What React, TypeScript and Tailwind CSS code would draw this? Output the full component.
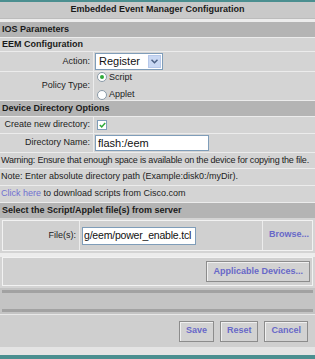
import React from "react";

function SectionHeader({ children }: { children: React.ReactNode }) {
  return (
    <div className="h-[15px] bg-[#b4b4b4] flex items-center pl-[2px] font-bold text-[9px] text-[#1a1a1a]">
      {children}
    </div>
  );
}

function FieldRow({ label, height, children }: { label: string; height: string; children: React.ReactNode }) {
  return (
    <div className={`flex gap-px ${height}`}>
      <div className="w-[93px] bg-[#d4d4d4] flex items-center justify-end pr-[3px]">{label}</div>
      <div className="flex-1 bg-[#d4d4d4] flex items-center pl-px">{children}</div>
    </div>
  );
}

function Radio({ checked, label }: { checked?: boolean; label: string }) {
  return (
    <div className="flex items-center gap-[2px]">
      <span className="w-[10px] h-[10px] rounded-full bg-white border border-[#8a9aa8] flex items-center justify-center">
        {checked && <span className="w-[4px] h-[4px] rounded-full bg-[#2faa3a]" />}
      </span>
      <span>{label}</span>
    </div>
  );
}

function Btn({ children }: { children: React.ReactNode }) {
  return (
    <div className="border border-[#8c8c8c] shadow-[inset_1px_1px_0_#f0f0f0] bg-[#d2d2d2] h-[21px] px-[6px] flex items-center font-bold text-[#6868c8]">
      {children}
    </div>
  );
}

export default function App() {
  return (
    <div className="w-[315px] h-[359px] bg-[#ececec] flex flex-col overflow-hidden font-['Liberation_Sans',Arial,sans-serif] text-[9px] text-[#222]">
      <div className="h-[2px] bg-[#4b8f90]" />
      <div className="h-[17px] bg-[#c9c9c9] border-b border-[#bcbcbc] flex items-center justify-center font-bold text-[#1a1a1a]">
        Embedded Event Manager Configuration
      </div>
      <div className="h-[3px]" />

      <div className="flex flex-col gap-px">
        <SectionHeader>IOS Parameters</SectionHeader>
        <div className="h-[13px] bg-[#d4d4d4] flex items-center pl-[2px] font-bold text-[#1a1a1a]">EEM Configuration</div>

        <FieldRow label="Action:" height="h-[19px]">
          <div className="w-[68px] h-[17px] bg-white border border-[#7f9db9] flex items-center">
            <span className="flex-1 pl-[3px] text-[11px] text-[#111]">Register</span>
            <span className="w-[13px] h-[13px] mr-px bg-[#c9d8f3] border border-[#b6c8ea] flex items-center justify-center">
              <svg width="7" height="5" viewBox="0 0 7 5">
                <path d="M0.5 0.8 L3.5 3.8 L6.5 0.8" fill="none" stroke="#4d6185" strokeWidth="1.5" />
              </svg>
            </span>
          </div>
        </FieldRow>

        <FieldRow label="Policy Type:" height="h-[28px]">
          <div className="flex flex-col gap-[4px] pl-[2px]">
            <Radio checked label="Script" />
            <Radio label="Applet" />
          </div>
        </FieldRow>

        <SectionHeader>Device Directory Options</SectionHeader>

        <FieldRow label="Create new directory:" height="h-[16px]">
          <span className="ml-[2px] w-[10px] h-[10px] bg-white border border-[#7f9db9] flex items-center justify-center">
            <svg width="7" height="6" viewBox="0 0 7 6">
              <path d="M0.8 3 L2.7 4.9 L6.2 0.9" fill="none" stroke="#2faa3a" strokeWidth="1.5" />
            </svg>
          </span>
        </FieldRow>

        <FieldRow label="Directory Name:" height="h-[18px]">
          <div className="w-[114px] h-[16px] bg-white border border-[#7f9db9] flex items-center pl-[2px] text-[11px] text-[#111]">
            flash:/eem
          </div>
        </FieldRow>

        <div className="h-[15px] bg-[#d4d4d4] flex items-center pl-px whitespace-nowrap tracking-[-0.2px]">
          Warning: Ensure that enough space is available on the device for copying the file.
        </div>
        <div className="h-[16px] bg-[#d4d4d4] flex items-center pl-px">
          Note: Enter absolute directory path (Example:disk0:/myDir).
        </div>
        <div className="h-[16px] bg-[#d4d4d4] flex items-center pl-px">
          <span className="text-[#7070d0]">Click here</span>&nbsp;to download scripts from Cisco.com
        </div>

        <SectionHeader>Select the Script/Applet file(s) from server</SectionHeader>
      </div>

      <div className="h-[35px] bg-[#d4d4d4] p-[2px]">
        <div className="h-full border border-[#f2f2f2] flex gap-px bg-[#ececec]">
          <div className="w-[76px] bg-[#d0d0d0] flex items-center justify-end pr-[3px]">File(s):</div>
          <div className="w-[182px] bg-[#d0d0d0] flex items-center pl-[2px]">
            <div className="w-[114px] h-[18px] bg-white border border-[#7f9db9] flex items-center pl-px overflow-hidden text-[10.5px] tracking-[-0.2px] text-[#111] whitespace-nowrap">
              g/eem/power_enable.tcl
            </div>
          </div>
          <div className="flex-1 bg-[#d0d0d0] flex justify-end pr-[3px] pt-[7px] font-bold text-[#6868c8]">Browse...</div>
        </div>
      </div>

      <div className="h-[4px]" />

      <div className="h-[31px] bg-[#d4d4d4] px-[2px] pb-[2px]">
        <div className="h-full border border-[#f2f2f2] bg-[#d0d0d0] flex items-center justify-end pr-[2px]">
          <Btn>Applicable Devices...</Btn>
        </div>
      </div>

      <div className="h-[26px] bg-[#c4c4c4] flex flex-col justify-between py-[2px] px-[2px]">
        <div className="h-[3px] bg-[#a2a2a2]" />
        <div className="h-[3px] bg-[#a2a2a2]" />
      </div>

      <div className="h-[33px] bg-[#cfcfcf] border-t border-[#e8e8e8] flex items-center justify-end gap-[6px] pr-[7px]">
        <Btn>Save</Btn>
        <Btn>Reset</Btn>
        <Btn>Cancel</Btn>
      </div>

      <div className="flex-1 bg-[#e4e4e4]" />
      <div className="h-[4px] bg-[#4b8f90]" />
    </div>
  );
}
